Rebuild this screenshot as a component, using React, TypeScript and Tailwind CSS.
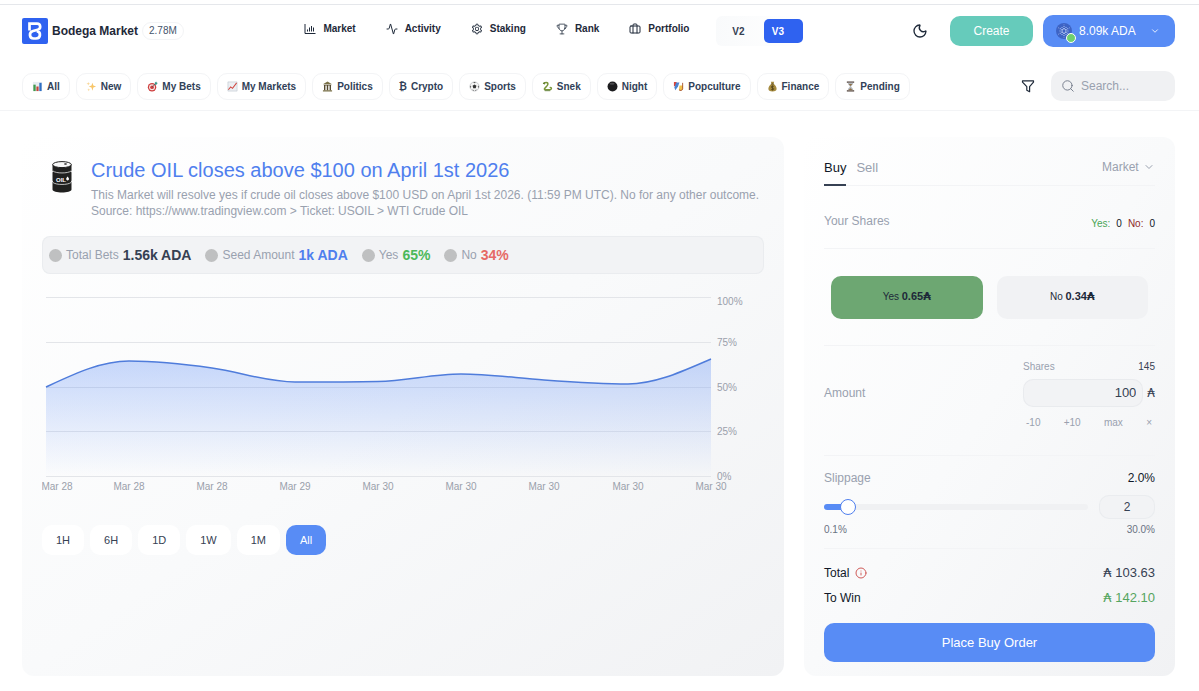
import { useState, type ReactNode } from "react";
import {
  Activity,
  Briefcase,
  ChevronDown,
  Info,
  Moon,
  Search,
} from "lucide-react";
import { AiOutlineSetting } from "react-icons/ai";
import { IoTrophyOutline } from "react-icons/io5";

function MarketIcon() {
  return (
    <svg viewBox="0 0 12 12" className="size-3" fill="none" stroke="currentColor" strokeWidth="1">
      <path d="M1 1v9.5h10.5M3.500 8.500v-2M5.500 8.500v-4M7.500 8.500v-5.500M9.500 8.500v-4" />
    </svg>
  );
}

function FilterIcon() {
  return (
    <svg
      viewBox="0 0 14 14"
      className="size-[14px] text-gray-800"
      fill="none"
      stroke="currentColor"
      strokeWidth="1.200"
      strokeLinejoin="round"
    >
      <path d="M1.500 1.800h11v1.400L8.600 7.700v5L5.800 11.200V7.700L1.500 3.200z" />
    </svg>
  );
}

const NAV_LINKS: { label: string; icon: ReactNode }[] = [
  { label: "Market", icon: <MarketIcon /> },
  { label: "Activity", icon: <Activity className="size-3" strokeWidth={2} /> },
  { label: "Staking", icon: <AiOutlineSetting className="size-3" /> },
  { label: "Rank", icon: <IoTrophyOutline className="size-3" /> },
  { label: "Portfolio", icon: <Briefcase className="size-3" strokeWidth={2} /> },
];

// small pictograms, all on a 12x12 grid
const CATEGORIES: { label: string; icon: ReactNode }[] = [
  {
    label: "All",
    icon: (
      <>
        <path fill="#e8edf2" d="M1 1h10v10H1z" />
        <path fill="#3f9a4d" d="M1.500 4h2.500v7H1.500z" />
        <path fill="#c4453c" d="M4.800 6h2.400v5H4.800z" />
        <path fill="#2f6fc4" d="M8 2h2.500v9H8z" />
      </>
    ),
  },
  {
    label: "New",
    icon: (
      <>
        <path fill="#f8c66a" d="m7 2 1 3 3 1-3 1-1 3.500-1-3.500-3-1 3-1z" />
        <path fill="#f9d592" d="m2.500 1 .5 1.500 1.500.5-1.500.5-.5 1.500-.5-1.500L.5 3l1.500-.5zM3 8l.4 1.200 1.200.4-1.200.4L3 11.200 2.600 10l-1.200-.4 1.200-.4z" />
      </>
    ),
  },
  {
    label: "My Bets",
    icon: (
      <>
        <circle cx="5.500" cy="6.800" r="4.600" fill="#cf3f3f" />
        <circle cx="5.500" cy="6.800" r="3.200" fill="#f3e9e6" />
        <circle cx="5.500" cy="6.800" r="2" fill="#cf3f3f" />
        <path stroke="#4a4a4a" strokeWidth=".8" d="m5.500 6.800 4-4" />
        <path fill="#3c9a8c" d="m8.500 2 1.500-1.500.5 1.200 1.200.5L10.200 4H8.500z" />
      </>
    ),
  },
  {
    label: "My Markets",
    icon: (
      <>
        <path fill="#eceff3" stroke="#b9c0ca" strokeWidth=".6" d="M1 1h10v10H1z" />
        <path fill="none" stroke="#d0453e" strokeWidth="1.100" d="m1.500 9.500 2.500-3 2 1.500 4.500-6" />
      </>
    ),
  },
  {
    label: "Politics",
    icon: (
      <>
        <path fill="#7b7248" d="m6 .5 5 3H1zM1 10h10v1.500H1z" />
        <path fill="#54492f" d="M2 4h8v.8H2zM2.200 4.800h1.500V10H2.200zM5.200 4.800h1.600V10H5.200zM8.300 4.800h1.500V10H8.300z" />
      </>
    ),
  },
  { label: "Crypto", icon: null },
  {
    label: "Sports",
    icon: (
      <>
        <circle cx="6" cy="6" r="5" fill="#f4f4f4" stroke="#a5a7ac" strokeWidth=".6" />
        <path fill="#333" d="m6 3.800 2.100 1.500-.8 2.500H4.700l-.8-2.500zM4.500 1.300h3L6 2.400zM1.200 5l1.200 1-.6 2zM10.800 5 9.600 6l.6 2zM3.500 9.200l1.500.6v1zM8.500 9.200 7 9.800v1z" />
      </>
    ),
  },
  {
    label: "Snek",
    icon: (
      <>
        <path fill="none" stroke="#79953a" strokeWidth="1.600" strokeLinecap="round" d="M2 2.500C5 .8 7.500 2 6 4.500S1.500 8.500 3 9.500h5.500c2 0 2.500-2.500.5-2.500" />
        <path fill="none" stroke="#4f7026" strokeWidth=".8" d="M3 10.600h6" />
        <path fill="#5a7a2b" d="M.8 2.400 3 1v3z" />
      </>
    ),
  },
  {
    label: "Night",
    icon: (
      <>
        <circle cx="6" cy="6" r="5.400" fill="#1c1c1e" />
        <ellipse cx="5.500" cy="3" rx="2.800" ry="1.200" fill="#4a4a4d" />
      </>
    ),
  },
  {
    label: "Popculture",
    icon: (
      <>
        <path fill="#d6453d" d="M1 1h3v3.500L1 6z" />
        <path fill="#4b84d0" d="M3.500 1.500h3.500L5.500 6l-3 4-1-3z" />
        <path fill="#efc24c" d="M7 5h4v3.500c0 2-4 2.500-4.500 1z" />
        <path fill="none" stroke="#a8552f" strokeWidth="1" d="M10.500 2v6.500c0 2-3 2.500-4 1" />
      </>
    ),
  },
  {
    label: "Finance",
    icon: (
      <>
        <path fill="#a68b3f" d="M4.200.800h3.600L7 3c2 1.300 3.500 3.500 3.500 5.500S9 11.400 6 11.400 1.500 10.500 1.500 8.500 3 4.300 5 3z" />
        <path fill="none" stroke="#4b3d17" strokeWidth=".8" d="M4.500 3.200h3M7.500 6c-1-1-3-.6-3 .6s3 .8 3 2-2 1.500-3 .5M6 5v5.200" />
      </>
    ),
  },
  {
    label: "Pending",
    icon: (
      <>
        <path fill="#4b3b34" d="M2 .500h8v1.400H2zM2 10.100h8v1.400H2z" />
        <path fill="#b4b8bd" d="M3 1.900h6c0 2-2 3-2.400 4.100C7 7.200 9 8 9 10.100H3C3 8 5 7.200 5.400 6 5 5 3 4 3 1.900z" />
        <path fill="#8f6f45" d="M4 3.200h4L6 5.500zM6 8l2.500 2.100h-5z" />
      </>
    ),
  },
];

const X_LABELS = [
  { x: 15, text: "Mar 28" },
  { x: 87, text: "Mar 28" },
  { x: 170, text: "Mar 28" },
  { x: 253, text: "Mar 29" },
  { x: 336, text: "Mar 30" },
  { x: 419, text: "Mar 30" },
  { x: 502, text: "Mar 30" },
  { x: 586, text: "Mar 30" },
  { x: 669, text: "Mar 30" },
];

const Y_LABELS = [
  { line: 7, text: "100%", y: 15 },
  { line: 52, text: "75%", y: 56 },
  { line: 97, text: "50%", y: 101 },
  { line: 141, text: "25%", y: 145 },
  { line: 186, text: "0%", y: 190 },
];

const CURVE =
  "M4 97C32 84 59 71 87 71C115 71 142 74 170 78C198 82 225 92 253 92C281 92 308 92 336 91.500C364 91 391 84 419 84C447 84 474 88 502 90C530 92 558 94 586 94C614 94 641 81 669 69";

const RANGES = ["1H", "6H", "1D", "1W", "1M", "All"];

function Logo() {
  return (
    <svg viewBox="0 0 26 26" className="size-[26px] shrink-0" aria-hidden="true">
      <rect width="26" height="26" rx="2" fill="#2f62f0" />
      <path
        d="M7.500 12.500V5.700H15c4 0 4.200 5 .8 6l-4.800 1.300c-4.300 1.200-4 7.500.6 7.500H14c5 0 5.200-6.500.8-7.300"
        fill="none"
        stroke="#fff"
        strokeWidth="2.700"
      />
    </svg>
  );
}

function CardanoIcon() {
  const spokes = [0, 60, 120, 180, 240, 300];
  return (
    <svg viewBox="0 0 16 16" className="size-4" aria-hidden="true">
      <circle cx="8" cy="8" r="8" fill="#3d63c4" />
      <g fill="#dbe6ff">
        {spokes.map((a) => (
          <g key={a} transform={`rotate(${a} 8 8)`}>
            <circle cx="8" cy="5.800" r=".8" />
            <circle cx="8" cy="3.600" r=".5" />
            <circle cx="10" cy="4.600" r=".5" />
            <circle cx="8" cy="1.800" r=".35" />
          </g>
        ))}
      </g>
    </svg>
  );
}

function Header() {
  return (
    <header className="border-y border-gray-200 border-b-gray-100 pt-[10px] pb-[9px] pl-[22px] pr-6">
      <div className="flex h-8 items-center justify-between">
        <div className="flex items-center gap-1">
          <Logo />
          <span className="text-[12px] font-bold text-gray-800">Bodega Market</span>
          <span className="rounded-full border border-gray-100 px-1.5 text-[10px] leading-4 text-slate-600">
            2.78M
          </span>
        </div>

        <div className="flex items-center gap-[27px] pl-3">
          <nav className="flex gap-[30px] pb-1">
            {NAV_LINKS.map((link) => (
              <a
                key={link.label}
                href="#"
                className="flex items-center gap-[7px] text-[10px] leading-4 font-bold text-gray-800"
              >
                {link.icon}
                {link.label}
              </a>
            ))}
          </nav>
          <div className="flex h-[30px] items-center gap-2 rounded-md bg-gradient-to-r from-gray-50 to-white text-[10px] font-bold">
            <button type="button" className="h-6 w-10 pl-1 text-gray-700">
              V2
            </button>
            <button type="button" className="h-6 w-[39px] rounded-[5px] bg-[#2f62f0] pr-3 text-white">
              V3
            </button>
          </div>
        </div>

        <div className="flex items-center gap-[10px]">
          <button type="button" aria-label="Toggle theme" className="mr-3">
            <Moon className="size-4 text-gray-800" strokeWidth={2} />
          </button>
          <button
            type="button"
            className="h-[30px] w-[83px] rounded-[10px] bg-[#66cbbb] text-[12px] text-white"
          >
            Create
          </button>
          <button
            type="button"
            className="flex h-8 w-[132px] items-center rounded-[10px] bg-[#588cf5] pl-[13px] pr-[15px] text-[12px] text-white"
          >
            <span className="relative">
              <CardanoIcon />
              <span className="absolute -right-1 -bottom-1 size-[10px] rounded-full border border-white bg-[#6fd070]" />
            </span>
            <span className="ml-[7px]">8.09k ADA</span>
            <ChevronDown className="ml-auto size-[10px]" />
          </button>
        </div>
      </div>

      <div className="mt-6 flex items-center">
        <div className="flex gap-1.5">
          {CATEGORIES.map((category) => (
            <button
              key={category.label}
              type="button"
              className="flex h-[27px] items-center gap-1 rounded-[10px] border border-gray-100 px-[9px] text-[10px] font-bold whitespace-nowrap text-slate-700"
            >
              {category.icon ? (
                <svg viewBox="0 0 12 12" className="size-[11px]" aria-hidden="true">
                  {category.icon}
                </svg>
              ) : (
                <span className="font-['DejaVu_Sans',sans-serif]">₿</span>
              )}
              {category.label}
            </button>
          ))}
        </div>
        <button type="button" aria-label="Filter" className="mr-4 ml-auto">
          <FilterIcon />
        </button>
        <label className="flex h-[30px] w-[124px] items-center gap-1.5 rounded-[10px] bg-[#f0f1f3] px-[10px]">
          <Search className="size-[14px] shrink-0 text-gray-500" strokeWidth={1.5} />
          <input
            type="text"
            aria-label="Search"
            placeholder="Search..."
            className="w-full min-w-0 bg-transparent text-[12px] outline-none placeholder:text-gray-400"
          />
        </label>
      </div>
    </header>
  );
}

function OilBarrel() {
  return (
    <svg viewBox="0 0 20 32" className="h-8 w-5" aria-hidden="true">
      <path fill="#20201f" d="M.5 3.500v6l.5 1-.5 1v8l.5 1-.5 1v7c0 4 19 4 19 0v-7l-.5-1 .5-1v-8l-.5-1 .5-1v-6z" />
      <ellipse cx="10" cy="3.600" rx="9.300" ry="3" fill="#f7f7f7" stroke="#20201f" strokeWidth="1" />
      <ellipse cx="13.500" cy="3" rx="1.500" ry=".7" fill="#20201f" />
      <path fill="none" stroke="#e4e4e4" strokeWidth=".8" d="M1 10c3 2.600 15 2.600 18 0M1 21.500c3 2.600 15 2.600 18 0" />
      <text x="4" y="20.500" fill="#fff" fontSize="6" fontWeight="700" fontFamily="Liberation Sans, sans-serif">
        OIL
      </text>
      <path fill="#fff" d="M15.500 15.500c1 1.300 1.500 2 1.500 2.600a1.400 1.400 0 0 1-2.800 0c0-.6.500-1.300 1.300-2.600z" />
    </svg>
  );
}

function Stat({ label, value, color }: { label: string; value: string; color: string }) {
  return (
    <div className="flex items-center gap-1">
      <span className="size-[13px] rounded-full bg-[#bfc0c1]" />
      <span className="text-[12px] text-gray-400">{label}</span>
      <span className={`text-[14px] font-bold ${color}`}>{value}</span>
    </div>
  );
}

function PriceChart() {
  return (
    <svg
      viewBox="0 0 722 205"
      className="mt-4 block w-full"
      role="img"
      aria-label="Yes price over time"
      fontFamily="Liberation Sans, Arial, sans-serif"
      fontSize="10"
      fill="#9aa0ab"
    >
      <defs>
        <linearGradient id="area" x1="0" y1="69" x2="0" y2="186" gradientUnits="userSpaceOnUse">
          <stop offset="0" stopColor="#5b8cf5" stopOpacity=".34" />
          <stop offset="1" stopColor="#5b8cf5" stopOpacity="0" />
        </linearGradient>
      </defs>
      {Y_LABELS.map((tick) => (
        <g key={tick.text}>
          <path d={`M4 ${tick.line}.500H669`} stroke="#e3e5e9" />
          <text x="675" y={tick.y}>
            {tick.text}
          </text>
        </g>
      ))}
      <path d={`${CURVE}V186H4Z`} fill="url(#area)" />
      <path d={CURVE} fill="none" stroke="#4f7cdb" strokeWidth="1.500" />
      {X_LABELS.map((tick) => (
        <text key={tick.x} x={tick.x} y="200" textAnchor="middle">
          {tick.text}
        </text>
      ))}
    </svg>
  );
}

function MarketPanel() {
  const [range, setRange] = useState("All");

  return (
    <section className="rounded-xl bg-gradient-to-br from-white via-[#f9fafb] to-[#f1f2f4] px-5 pt-5 pb-[120px]">
      <div className="flex gap-[19px] pl-[10px]">
        <div className="pt-1">
          <OilBarrel />
        </div>
        <div className="min-w-0">
          <h1 className="text-[20px] leading-[26px] text-[#4f7fee]">
            Crude OIL closes above $100 on April 1st 2026
          </h1>
          <p className="mt-1 text-[12px] leading-4 text-gray-400">
            This Market will resolve yes if crude oil closes above $100 USD on April 1st 2026.
            (11:59 PM UTC). No for any other outcome.
            <br />
            Source: https://www.tradingview.com &gt; Ticket: USOIL &gt; WTI Crude OIL
          </p>
        </div>
      </div>

      <div className="mt-[17px] flex h-[38px] items-center gap-[14px] rounded-lg border border-gray-200/60 bg-[#f2f3f5] px-1.5">
        <Stat label="Total Bets" value="1.56k ADA" color="text-gray-700" />
        <Stat label="Seed Amount" value="1k ADA" color="text-[#4f7fee]" />
        <Stat label="Yes" value="65%" color="text-[#4cb85a]" />
        <Stat label="No" value="34%" color="text-[#e66a66]" />
      </div>

      <PriceChart />

      <div className="mt-[30px] flex gap-1.5">
        {RANGES.map((r) => (
          <button
            key={r}
            type="button"
            onClick={() => setRange(r)}
            className={`h-[30px] rounded-[10px] px-[14px] text-[11px] ${
              r === range ? "bg-[#588cf5] text-white" : "bg-white text-gray-700"
            }`}
          >
            {r}
          </button>
        ))}
      </div>
    </section>
  );
}

function Ada() {
  return <span className="font-['DejaVu_Sans',sans-serif]">₳</span>;
}

function OrderPanel() {
  const [amount, setAmount] = useState("100");
  const [slippage, setSlippage] = useState(2);
  const filled = ((slippage - 0.1) / 29.9) * 100;

  return (
    <section className="rounded-xl bg-gradient-to-br from-white via-[#f9fafb] to-[#f1f2f4] px-5 pt-[18px] pb-[14px] text-[12px] text-gray-700">
      <div className="flex h-[31px] items-start justify-between border-b border-gray-100">
        <div className="flex gap-[10px] text-[13px] leading-6">
          <button type="button" className="h-[31px] border-b-2 border-gray-700 pb-1 text-gray-900">
            Buy
          </button>
          <button type="button" className="h-[31px] border-b-2 border-transparent pb-1 text-gray-400">
            Sell
          </button>
        </div>
        <div className="flex items-center gap-1 text-gray-400">
          <select aria-label="Order type" className="appearance-none bg-transparent leading-6 outline-none">
            <option>Market</option>
          </select>
          <ChevronDown className="pointer-events-none size-3" />
        </div>
      </div>

      <div className="flex h-[63px] items-center justify-between border-b border-gray-100 pt-2">
        <span className="text-gray-400">Your Shares</span>
        <span className="flex gap-1.5 pt-1 text-[10px] text-gray-900">
          <span className="text-[#4aa557]">Yes:</span>0<span className="text-[#8f2a2a]">No:</span>0
        </span>
      </div>

      <div className="flex h-[97px] items-center gap-[14px] border-b border-gray-100 px-[7px] text-[10px] text-gray-800">
        <button type="button" className="h-[43px] flex-1 rounded-[10px] bg-[#6da772]">
          Yes <b className="text-[11px]">0.65<Ada /></b>
        </button>
        <button type="button" className="h-[43px] flex-1 rounded-[10px] bg-[#f1f2f4]">
          No <b className="text-[11px]">0.34<Ada /></b>
        </button>
      </div>

      <div className="flex h-[110px] items-center justify-between border-b border-gray-100">
        <label htmlFor="amount" className="pb-4 text-gray-400">
          Amount
        </label>
        <div className="w-[132px] pb-3">
          <div className="flex justify-between text-[10px] leading-4">
            <span className="text-gray-400">Shares</span>
            <span>145</span>
          </div>
          <div className="mt-1 flex items-center gap-1">
            <input
              id="amount"
              type="text"
              value={amount}
              onChange={(e) => setAmount(e.target.value)}
              className="h-7 w-full min-w-0 rounded-[10px] border border-gray-200/70 bg-[#f2f3f5] px-1.5 text-right text-[13px] outline-none"
            />
            <Ada />
          </div>
          <div className="mt-2 flex justify-between px-[3px] text-[10px] leading-4 text-gray-400">
            <button type="button">-10</button>
            <button type="button">+10</button>
            <button type="button">max</button>
            <button type="button" aria-label="Clear">×</button>
          </div>
        </div>
      </div>

      <div className="h-[93px] border-b border-gray-100 pt-3">
        <div className="flex justify-between leading-5">
          <label htmlFor="slippage" className="text-gray-400">
            Slippage
          </label>
          <span className="text-gray-900">2.0%</span>
        </div>
        <div className="mt-[7px] flex items-center gap-[11px]">
          <input
            id="slippage"
            type="range"
            min={0.1}
            max={30}
            step={0.1}
            value={slippage}
            onChange={(e) => setSlippage(Number(e.target.value))}
            style={{
              backgroundImage: `linear-gradient(to right, #588cf5 ${filled}%, #f0f1f3 ${filled}%)`,
            }}
            className="h-1.5 min-w-0 flex-1 appearance-none rounded-full [&::-webkit-slider-thumb]:size-4 [&::-webkit-slider-thumb]:appearance-none [&::-webkit-slider-thumb]:rounded-full [&::-webkit-slider-thumb]:border [&::-webkit-slider-thumb]:border-[#4f7fee] [&::-webkit-slider-thumb]:bg-white"
          />
          <input
            type="text"
            aria-label="Slippage percent"
            value={slippage}
            onChange={(e) => setSlippage(Number(e.target.value) || 0.1)}
            className="h-6 w-14 rounded-[10px] border border-gray-200/60 bg-[#f2f3f5] text-center outline-none"
          />
        </div>
        <div className="mt-[3px] flex justify-between text-[10px] leading-4 text-gray-500">
          <span>0.1%</span>
          <span>30.0%</span>
        </div>
      </div>

      <dl className="flex flex-col gap-[5px] pt-[14px] pb-[15px] leading-5 text-gray-900">
        <div className="flex justify-between">
          <dt className="flex items-center gap-1.5">
            Total
            <Info className="size-3 text-[#cf5a58]" strokeWidth={2} />
          </dt>
          <dd className="text-[13px] text-gray-700">
            <Ada /> 103.63
          </dd>
        </div>
        <div className="flex justify-between">
          <dt>To Win</dt>
          <dd className="text-[13px] text-[#55a560]">
            <Ada /> 142.10
          </dd>
        </div>
      </dl>

      <button type="button" className="h-[39px] w-full rounded-[10px] bg-[#588cf5] text-[13px] text-white">
        Place Buy Order
      </button>
    </section>
  );
}

export default function App() {
  return (
    <div className="min-h-screen bg-white pt-1 font-['Liberation_Sans',Arial,sans-serif]">
      <Header />
      <main className="grid grid-cols-[minmax(0,1fr)_371px] gap-5 pt-[26px] pr-6 pb-4 pl-[22px]">
        <MarketPanel />
        <OrderPanel />
      </main>
    </div>
  );
}
